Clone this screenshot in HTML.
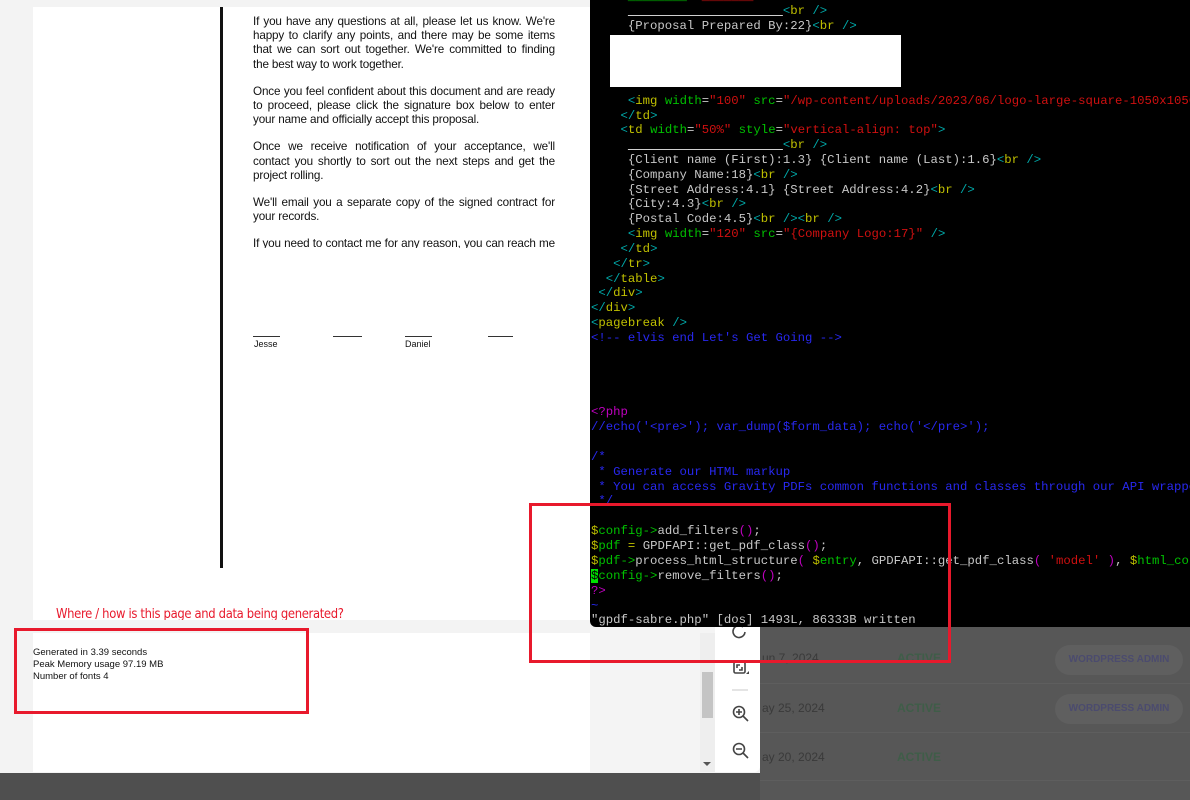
<!DOCTYPE html>
<html><head><meta charset="utf-8"><style>
*{margin:0;padding:0;box-sizing:border-box}
html,body{width:1190px;height:800px;overflow:hidden}
body{position:relative;background:#f3f3f3;font-family:"Liberation Sans",Arial,sans-serif}
.abs{position:absolute}
#page{left:33px;top:7px;width:570px;height:613px;background:#fff}
#vline{left:220px;top:7px;width:3px;height:561px;background:#111}
#doc{left:253px;top:15px;width:302px;height:233px;overflow:hidden;font-size:11.7px;letter-spacing:-0.15px;line-height:14.2px;color:#111;text-align:justify}
#doc p{margin-bottom:13px}
.sig{height:1px;background:#333;top:336px}
.nm{font-size:9px;top:339px;color:#111}
#q{left:56px;top:606px;color:#e8192c;font-size:13.5px;font-family:"DejaVu Sans","Liberation Sans",sans-serif;letter-spacing:-0.4px;transform:scaleX(.86);transform-origin:left}
#band{left:33px;top:620px;width:700px;height:13px;background:#f3f3f3}
#panel{left:33px;top:633px;width:727px;height:139px;background:#fff;border-bottom-right-radius:6px}
#gen{left:33px;top:647px;font-size:9.5px;line-height:11.8px;color:#111}
#dark{left:0;top:773px;width:1190px;height:27px;background-color:#4f4f4f}
#right{left:760px;top:627px;width:430px;height:173px;background-color:#575757}
#shade{left:590px;top:627px;width:125px;height:145px;background-color:#f4f4f4}
#sb{left:700px;top:633px;width:15px;height:139px;background-color:#eee}
#thumb{left:702px;top:672px;width:11px;height:46px;background-color:#c4c4c4}
#tb{left:715px;top:627px;width:45px;height:145px;background-color:#fff;border-bottom-right-radius:6px}
.row{color:#3f5d48;font-weight:bold;font-size:12px}
.dt{color:#3a3a3a;font-size:12px}
.pill{width:128px;height:30px;border-radius:15px;background-color:#5f5f5f;color:#4b4b6e;font-weight:bold;font-size:10px;line-height:30px;text-align:center}
.rl{left:760px;width:430px;height:1px;background-color:#5e5e5e}
#term{left:590px;top:0;width:600px;height:627px;background:#000;border-bottom-left-radius:6px;overflow:hidden;font-family:"Liberation Mono","Courier New",monospace;font-size:12.3px;color:#c8c8c8;white-space:pre}
#ti{position:absolute;left:0;top:2px;width:600px;height:627px}
.l{position:absolute;left:1px;height:15px;line-height:15px}
.t{color:#c0c000}.p{color:#00a8a8}.a{color:#00c000}.s{color:#d01010}.c{color:#2828f0}.m{color:#c000c0}.w{color:#d0d0d0}
#white{left:610px;top:35px;width:291px;height:52px;background:#fff}
.box{border:3px solid #e8192c}
</style></head><body>
<div class="abs" id="page"></div>
<div class="abs" id="vline"></div>
<div class="abs" id="doc">
<p>If you have any questions at all, please let us know. We're happy to clarify any points, and there may be some items that we can sort out together. We're committed to finding the best way to work together.</p>
<p>Once you feel confident about this document and are ready to proceed, please click the signature box below to enter your name and officially accept this proposal.</p>
<p>Once we receive notification of your acceptance, we'll contact you shortly to sort out the next steps and get the project rolling.</p>
<p>We'll email you a separate copy of the signed contract for your records.</p>
<p>If you need to contact me for any reason, you can reach me at any time.</p>
</div>
<div class="abs sig" style="left:253px;width:27px"></div>
<div class="abs sig" style="left:333px;width:29px"></div>
<div class="abs sig" style="left:405px;width:27px"></div>
<div class="abs sig" style="left:488px;width:25px"></div>
<div class="abs nm" style="left:254px">Jesse</div>
<div class="abs nm" style="left:405px">Daniel</div>
<div class="abs" id="q">Where / how is this page and data being generated?</div>
<div class="abs" id="band"></div>
<div class="abs" id="panel"></div>
<div class="abs" id="gen">Generated in 3.39 seconds<br>Peak Memory usage 97.19 MB<br>Number of fonts 4</div>
<div class="abs" id="dark"></div>
<div class="abs" id="right"></div>
<div class="abs" id="shade"></div>
<div class="abs" id="sb"></div>
<div class="abs" id="thumb"></div>
<div class="abs" style="left:703px;top:762px;width:0;height:0;border-left:4px solid transparent;border-right:4px solid transparent;border-top:4px solid #555"></div>
<div class="abs" id="tb"></div>
<svg class="abs" style="left:728px;top:622px" width="26" height="150" viewBox="0 0 26 150" fill="none" stroke="#444" stroke-width="1.6">
<path d="M17 10 A6 6 0 1 1 15 5"/>
<rect x="6" y="40" width="11" height="11" rx="1.5"/><path d="M9 46v-3h3M14 45v3h-3"/><path d="M18 52l3 0 0-3z" fill="#444" stroke="none"/>
<path d="M4 68h16" stroke="#ddd"/>
<circle cx="11" cy="90" r="5.5"/><path d="M15 94l5 5M8 90h6M11 87v6"/>
<circle cx="11" cy="127" r="5.5"/><path d="M15 131l5 5M8 127h6"/>
</svg>
<div class="abs rl" style="top:683px"></div>
<div class="abs rl" style="top:732px"></div>
<div class="abs rl" style="top:780px"></div>
<div class="abs dt" style="left:762px;top:651px">un 7, 2024</div>
<div class="abs dt" style="left:762px;top:701px">ay 25, 2024</div>
<div class="abs dt" style="left:762px;top:750px">ay 20, 2024</div>
<div class="abs row" style="left:897px;top:651px">ACTIVE</div>
<div class="abs row" style="left:897px;top:701px">ACTIVE</div>
<div class="abs row" style="left:897px;top:750px">ACTIVE</div>
<div class="abs pill" style="left:1055px;top:645px">WORDPRESS ADMIN</div>
<div class="abs pill" style="left:1055px;top:694px">WORDPRESS ADMIN</div>
<div class="abs" id="term"><div id="ti">
<div class="l" style="top:-12px">     <span class="a">________</span>  <span class="s">_______</span></div>
<div class="l" style="top:2px">     <span class="w" style="text-decoration:underline">                     </span><span class="p">&lt;</span><span class="t">br</span> <span class="p">/&gt;</span></div>
<div class="l" style="top:17px">     {Proposal Prepared By:22}<span class="p">&lt;</span><span class="t">br</span> <span class="p">/&gt;</span></div>
<div class="l" style="top:92px">     <span class="p">&lt;</span><span class="t">img</span> <span class="a">width</span>=<span class="s">"100"</span> <span class="a">src</span>=<span class="s">"/wp-content/uploads/2023/06/logo-large-square-1050x1050</span></div>
<div class="l" style="top:107px">    <span class="p">&lt;/</span><span class="t">td</span><span class="p">&gt;</span></div>
<div class="l" style="top:121px">    <span class="p">&lt;</span><span class="t">td</span> <span class="a">width</span>=<span class="s">"50%"</span> <span class="a">style</span>=<span class="s">"vertical-align: top"</span><span class="p">&gt;</span></div>
<div class="l" style="top:136px">     <span class="w" style="text-decoration:underline">                     </span><span class="p">&lt;</span><span class="t">br</span> <span class="p">/&gt;</span></div>
<div class="l" style="top:151px">     {Client name (First):1.3} {Client name (Last):1.6}<span class="p">&lt;</span><span class="t">br</span> <span class="p">/&gt;</span></div>
<div class="l" style="top:166px">     {Company Name:18}<span class="p">&lt;</span><span class="t">br</span> <span class="p">/&gt;</span></div>
<div class="l" style="top:181px">     {Street Address:4.1} {Street Address:4.2}<span class="p">&lt;</span><span class="t">br</span> <span class="p">/&gt;</span></div>
<div class="l" style="top:195px">     {City:4.3}<span class="p">&lt;</span><span class="t">br</span> <span class="p">/&gt;</span></div>
<div class="l" style="top:210px">     {Postal Code:4.5}<span class="p">&lt;</span><span class="t">br</span> <span class="p">/&gt;&lt;</span><span class="t">br</span> <span class="p">/&gt;</span></div>
<div class="l" style="top:225px">     <span class="p">&lt;</span><span class="t">img</span> <span class="a">width</span>=<span class="s">"120"</span> <span class="a">src</span>=<span class="s">"{Company Logo:17}"</span> <span class="p">/&gt;</span></div>
<div class="l" style="top:240px">    <span class="p">&lt;/</span><span class="t">td</span><span class="p">&gt;</span></div>
<div class="l" style="top:255px">   <span class="p">&lt;/</span><span class="t">tr</span><span class="p">&gt;</span></div>
<div class="l" style="top:270px">  <span class="p">&lt;/</span><span class="t">table</span><span class="p">&gt;</span></div>
<div class="l" style="top:284px"> <span class="p">&lt;/</span><span class="t">div</span><span class="p">&gt;</span></div>
<div class="l" style="top:299px"><span class="p">&lt;/</span><span class="t">div</span><span class="p">&gt;</span></div>
<div class="l" style="top:314px"><span class="p">&lt;</span><span class="t">pagebreak</span> <span class="p">/&gt;</span></div>
<div class="l c" style="top:329px">&lt;!-- elvis end Let's Get Going --&gt;</div>
<div class="l m" style="top:403px">&lt;?php</div>
<div class="l c" style="top:418px">//echo('&lt;pre&gt;'); var_dump($form_data); echo('&lt;/pre&gt;');</div>
<div class="l c" style="top:448px">/*</div>
<div class="l c" style="top:463px"> * Generate our HTML markup</div>
<div class="l c" style="top:478px"> * You can access Gravity PDFs common functions and classes through our API wrapper</div>
<div class="l c" style="top:492px"> */</div>
<div class="l" style="top:522px"><span class="t">$</span><span class="a">config-&gt;</span>add_filters<span class="m">()</span>;</div>
<div class="l" style="top:537px"><span class="t">$</span><span class="a">pdf</span> <span class="t">=</span> GPDFAPI::get_pdf_class<span class="m">()</span>;</div>
<div class="l" style="top:552px"><span class="t">$</span><span class="a">pdf-&gt;</span>process_html_structure<span class="m">(</span> <span class="t">$</span><span class="a">entry</span>, GPDFAPI::get_pdf_class<span class="m">(</span> <span class="s">'model'</span> <span class="m">)</span>, <span class="t">$</span><span class="a">html_co</span></div>
<div class="l" style="top:567px"><span style="background:#00e000;color:#000">$</span><span class="a">config-&gt;</span>remove_filters<span class="m">()</span>;</div>
<div class="l m" style="top:582px">?&gt;</div>
<div class="l c" style="top:597px">~</div>
<div class="l" style="top:611px">"gpdf-sabre.php" [dos] 1493L, 86333B written</div>
</div></div>
<div class="abs" id="white"></div>
<div class="abs box" style="left:529px;top:503px;width:422px;height:160px"></div>
<div class="abs box" style="left:14px;top:628px;width:295px;height:86px"></div>
</body></html>
